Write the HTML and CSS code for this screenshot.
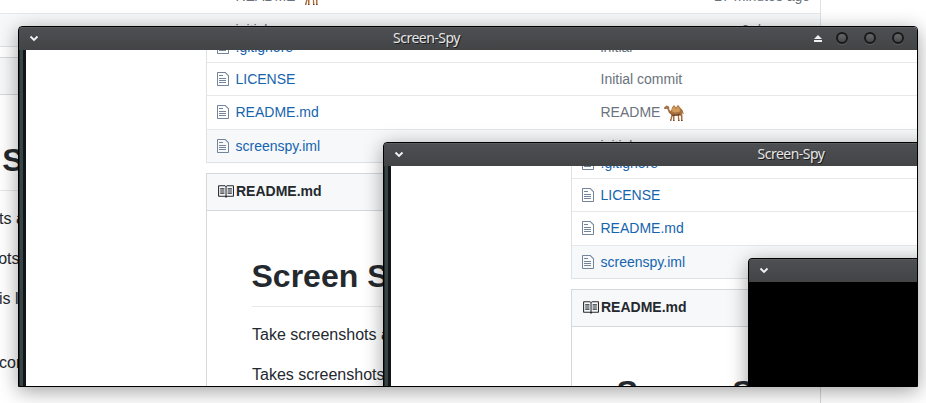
FILE: index.html
```
<!DOCTYPE html>
<html lang="en">
<head>
<meta charset="utf-8">
<title>Screen-Spy</title>
<link rel="stylesheet" href="styles.css">
</head>
<body>
<svg class="defs" aria-hidden="true">
  <symbol id="file" viewBox="0 0 12 16"><path d="M6 5H2V4h4v1zM2 8h7V7H2v1zm0 2h7V9H2v1zm0 2h7v-1H2v1zm10-7.500V14c0 .55-.45 1-1 1H1c-.55 0-1-.45-1-1V2c0-.55.45-1 1-1h7.500L12 4.500zM11 5L8 2H1v12h10V5z"/></symbol>
  <symbol id="book" viewBox="0 0 16 16"><path d="M3 5h4v1H3V5zm0 3h4V7H3v1zm0 2h4V9H3v1zm11-5h-4v1h4V5zm0 2h-4v1h4V7zm0 2h-4v1h4V9zm2-6v9c0 .55-.45 1-1 1H9.500l-1 1-1-1H2c-.55 0-1-.45-1-1V3c0-.55.45-1 1-1h5.500l1 1 1-1H15c.55 0 1 .45 1 1zm-8 .500L7.500 3H2v9h6V3.500zm7-.500H9.500l-.500.500V12h6V3z"/></symbol>
  <symbol id="camel" viewBox="0 0 21 18">
    <path fill="#a8703f" d="M0 3.500L2.500 1.500 5 2.500 5.500 6 7 7 8 3.500 10 1 12 3.500 14 .800 16.500 4 18.500 6 19.800 10 19 10 18 8.500 18.500 12 18.500 17 17 17 17 12.500 15.500 10.500 15 12 15.500 16.500 14 17 13.800 11 10.500 11 10.500 16.500 9 17 9 11 7.500 16 6 16.500 7.500 10.500 5 9 3.200 4.800 1 5z"/>
    <path fill="#cf9c5c" d="M8 5l2-3 2 3 2.200-3 2 4-1 2-5 .500-2-1z"/>
    <path fill="#744323" d="M5 8l3 2.500h5l2-1 1.500 1.500-2 .800-6 .200zM0 4.200l1.500-.200-.500 1zM6 15.800h1.500v1H6zM9 16h1.500v1H9zM14 16h1.500v1H14zM17 16h1.500v1H17z"/>
  </symbol>
  <symbol id="chevron" viewBox="0 0 10 7"><path d="M1.500 1.500L5 5l3.500-3.500" fill="none" stroke="#f2f2f2" stroke-width="1.900"/></symbol>
</svg>

<main class="desktop">
  <div class="page">
    <div class="files">
      <div class="row"></div>
      <div class="row"></div>
      <div class="row"><span class="message">README <svg class="camel"><use href="#camel"/></svg></span><span class="age">27 minutes ago</span></div>
      <div class="row shade"><span class="message">initial</span><span class="age">2 days ago</span></div>
    </div>
    <section class="readme">
      <header class="readme-head"></header>
      <article class="readme-body">
        <h1>Screen Spy</h1>
        <p>Take screenshots a</p>
        <p>Takes screenshots</p>
        <p class="tail">is l</p>
        <p class="tail spaced">cor</p>
      </article>
    </section>
  </div>

  <div class="window outer">
    <div class="titlebar">
      <svg class="chevron"><use href="#chevron"/></svg>
      <span class="title">Screen-Spy</span>
      <svg class="eject" viewBox="0 0 10 8"><path d="M5 0l4 4H1zM1 5h8v2H1z" fill="#f0f0f0"/></svg>
      <i class="knob"></i><i class="knob"></i><i class="knob"></i>
    </div>
    <div class="content">
      <div class="page">
        <div class="files">
          <div class="row"><svg class="file"><use href="#file"/></svg><a>.gitignore</a><span class="message">initial</span></div>
          <div class="row"><svg class="file"><use href="#file"/></svg><a>LICENSE</a><span class="message">Initial commit</span></div>
          <div class="row"><svg class="file"><use href="#file"/></svg><a>README.md</a><span class="message">README <svg class="camel"><use href="#camel"/></svg></span></div>
          <div class="row shade"><svg class="file"><use href="#file"/></svg><a>screenspy.iml</a><span class="message">initial</span></div>
        </div>
        <section class="readme">
          <header class="readme-head"><svg class="book"><use href="#book"/></svg>README.md</header>
          <article class="readme-body">
            <h1>Screen Spy</h1>
            <p>Take screenshots a</p>
            <p>Takes screenshots</p>
          </article>
        </section>
      </div>

      <div class="window inner">
        <div class="titlebar">
          <svg class="chevron"><use href="#chevron"/></svg>
          <span class="title">Screen-Spy</span>
          <span class="controls-space"></span>
        </div>
        <div class="content">
          <div class="page">
            <div class="files">
              <div class="row"><svg class="file"><use href="#file"/></svg><a>.gitignore</a></div>
              <div class="row"><svg class="file"><use href="#file"/></svg><a>LICENSE</a></div>
              <div class="row"><svg class="file"><use href="#file"/></svg><a>README.md</a></div>
              <div class="row shade"><svg class="file"><use href="#file"/></svg><a>screenspy.iml</a></div>
            </div>
            <section class="readme">
              <header class="readme-head"><svg class="book"><use href="#book"/></svg>README.md</header>
              <article class="readme-body"><h1>Screen Spy</h1></article>
            </section>
          </div>
          <div class="window inner blank">
            <div class="titlebar"><svg class="chevron"><use href="#chevron"/></svg></div>
            <div class="content"></div>
          </div>
        </div>
      </div>
    </div>
  </div>
</main>
</body>
</html>
```

FILE: styles.css
```
* { box-sizing: border-box; }

body {
  margin: 0;
  overflow: hidden;
  background: #fff;
  color: #24292e;
  font: 14px/20px "Liberation Sans", Arial, sans-serif;
}

.defs { position: absolute; width: 0; height: 0; }

.desktop {
  position: relative;
  width: 926px;
  height: 403px;
  overflow: hidden;
}

/* Repository page */
.page {
  width: 980px;
  margin: -87.330px 0 0 -159px;
}

.files {
  border: 1px solid #dfe2e5;
  border-top: 0;
  height: 134.330px;
}

.row {
  display: grid;
  grid-template-columns: 18.500px 365px 1fr auto;
  align-items: center;
  height: 33.333px;
  padding: 0 10px 1px;
  border-top: 1px solid #e6e9ec;
  white-space: nowrap;
}

.row:first-child { padding: 2px 10px 0; }
.row.shade { padding: 1px 10px 0; background: #f6f8fa; }
.row a { grid-column: 2; color: #1564ae; }
.message { grid-column: 3; color: #6a737d; }
.age { grid-column: 4; color: #6a737d; }

.file { width: 12px; height: 16px; fill: #74859a; }
.camel { width: 21px; height: 18px; margin: 0 0 -5px; }

.readme {
  height: 600px;
  margin-top: 10px;
  border: 1px solid #d5d8dc;
}

.readme-head {
  display: flex;
  align-items: center;
  gap: 2px;
  height: 37px;
  padding: 0 10px 2px;
  border-bottom: 1px solid #d5d8dc;
  background: #f6f8fa;
  font-weight: bold;
}

.book { width: 17px; height: 17px; fill: #24292e; }

.readme-body {
  padding: 45px;
  font-size: 16px;
  line-height: 24px;
}

h1 {
  margin: 0 0 16px;
  padding-bottom: 9.600px;
  border-bottom: 1px solid #e6e9ec;
  font-size: 32px;
  line-height: 40px;
  text-indent: -.5px;
}

p { margin: 0 0 16px; }
.tail { padding-left: 112px; }
.spaced { margin-top: 40px; }

/* Window chrome */
.window {
  position: absolute;
  width: 900px;
  height: 361px;
  border: 1px solid #000;
  border-radius: 4px 4px 0 0;
  background: linear-gradient(90deg, #20282a 0 1px, #394446 1px 4px, #111719 4px 7px, #fff 7px);
  box-shadow: 0 4px 20px rgba(0, 0, 0, .38);
}

.outer { left: 18px; top: 26px; }
.inner { left: 357px; top: 92px; }

.titlebar {
  display: flex;
  align-items: center;
  height: 23px;
  padding: 0 12px 0 10px;
  border-top: 1px solid #5c5d60;
  border-radius: 3px 3px 0 0;
  background: linear-gradient(#4e4f52, #434446);
}

.chevron { width: 10px; height: 7px; margin-bottom: 1px; }

.title {
  flex: 1;
  padding: 0 0 2px 1px;
  color: #e6e6e6;
  font: 14px/20px "Noto Sans", sans-serif;
  letter-spacing: -.5px;
  text-align: center;
  text-shadow: 1px 1px 0 #1c1c1c;
}

.eject { width: 10px; height: 8px; margin-right: 5px; }
.controls-space { width: 93px; }

.knob {
  width: 12px;
  height: 12px;
  margin: 0 8px 2px;
  border: 2px solid #191a1b;
  border-radius: 50%;
  background: linear-gradient(#67686a, #48494b);
  box-shadow: 0 1px 0 #5c5d5f;
}

.knob:last-child { margin-right: 1px; }

.content {
  position: relative;
  height: 336px;
  margin-left: 7px;
  overflow: hidden;
  background: #fff;
}

.content > .page { margin: -21.330px 0 0 180px; }

.blank { background: #000; }
.blank .content { margin-left: 0; background: #000; }
```
